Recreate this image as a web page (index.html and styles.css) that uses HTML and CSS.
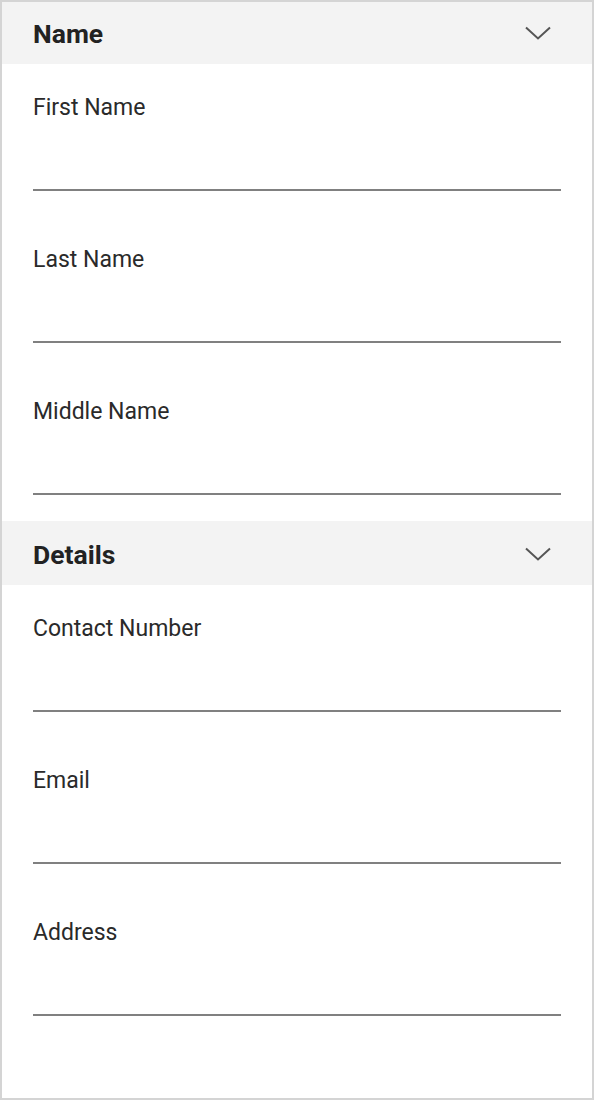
FILE: index.html
```html
<!DOCTYPE html>
<html lang="en">
<head>
<meta charset="utf-8">
<title>Form</title>
<link rel="stylesheet" href="styles.css">
</head>
<body>
<div class="panel">
  <section class="section">
    <div class="section-header">
      <h2 class="section-title">Name</h2>
      <svg class="chevron" width="26" height="14" viewBox="0 0 26 14"><path d="M1 1.5 L13 12.5 L25 1.5" fill="none" stroke="#555" stroke-width="2"/></svg>
    </div>
    <div class="field"><label class="field-label">First Name</label><div class="field-input"></div></div>
    <div class="field"><label class="field-label">Last Name</label><div class="field-input"></div></div>
    <div class="field"><label class="field-label">Middle Name</label><div class="field-input"></div></div>
  </section>
  <section class="section">
    <div class="section-header">
      <h2 class="section-title">Details</h2>
      <svg class="chevron" width="26" height="14" viewBox="0 0 26 14"><path d="M1 1.5 L13 12.5 L25 1.5" fill="none" stroke="#555" stroke-width="2"/></svg>
    </div>
    <div class="field"><label class="field-label">Contact Number</label><div class="field-input"></div></div>
    <div class="field"><label class="field-label">Email</label><div class="field-input"></div></div>
    <div class="field"><label class="field-label">Address</label><div class="field-input"></div></div>
  </section>
</div>
</body>
</html>
```
FILE: styles.css
```css
html, body {
  margin: 0;
  padding: 0;
  background: #fff;
}
.panel {
  position: relative;
  width: 594px;
  height: 1100px;
  box-sizing: border-box;
  background: #fff;
  font-family: Roboto, "Liberation Sans", sans-serif;
  color: #222;
  overflow: hidden;
}
.panel::after {
  content: "";
  position: absolute;
  inset: 0;
  border: 2px solid #d4d4d4;
  pointer-events: none;
}
.section {
  padding-bottom: 1px;
}
.section-header {
  height: 64px;
  background: #f3f3f3;
  display: flex;
  align-items: center;
  justify-content: space-between;
  padding: 0 43px 0 33px;
}
.section-title {
  margin: 3px 0 0 0;
  font-size: 26.5px;
  font-weight: 700;
  line-height: 30px;
  color: #222;
}
.chevron {
  display: block;
  margin-top: 2px;
}
.field {
  padding: 31px 33px 25px 33px;
}
.field-label {
  display: block;
  font-size: 23px;
  line-height: 26px;
  color: #2a2a2a;
}
.field-input {
  height: 68px;
  border-bottom: 2px solid #808080;
}
```
